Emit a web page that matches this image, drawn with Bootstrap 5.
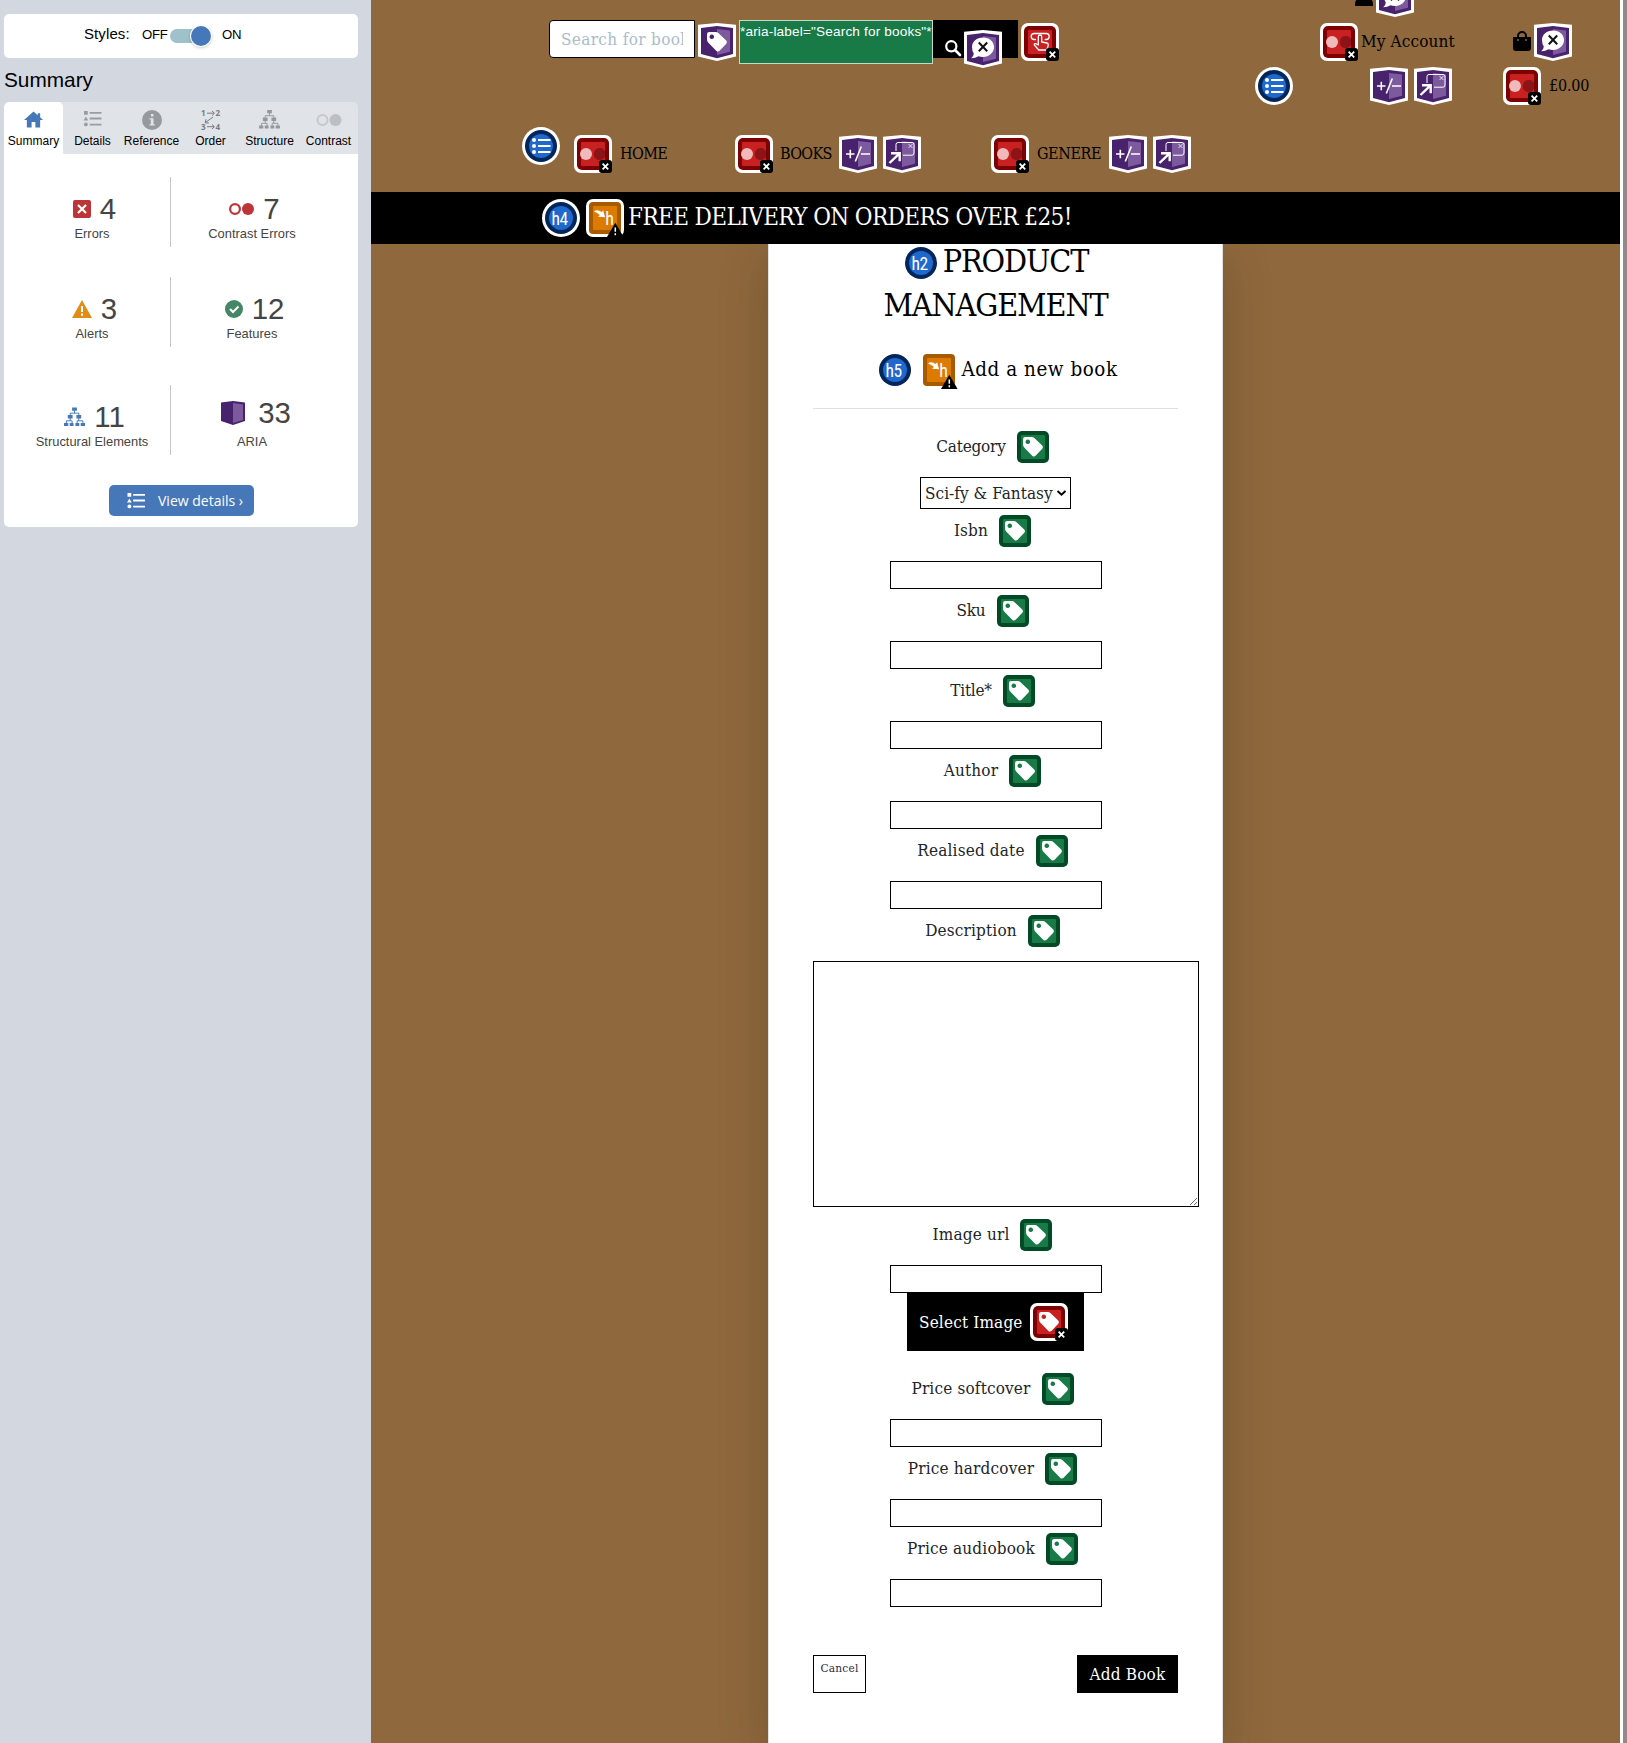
<!DOCTYPE html>
<html lang="en">
<head>
<meta charset="utf-8">
<meta name="viewport" content="width=device-width, initial-scale=1">
<title>Product Management</title>
<link href="https://cdn.jsdelivr.net/npm/bootstrap@5.3.0/dist/css/bootstrap.min.css" rel="stylesheet">
<style>
body{font-family:"Liberation Sans",Arial,sans-serif;color:#000;height:1743px;overflow:hidden;background:#8f683d}
svg{display:block;flex:none;overflow:visible}
.shell{height:1743px}
/* evaluation sidebar */
.side{width:371px;background:#d3d8e0;padding:14px 13px 0 4px}
.panel{background:#fff;border-radius:5px}
.styles-box{height:44px;padding-left:80px}
.styles-box span{margin-bottom:3px;white-space:nowrap}
.st1{font-size:15px;width:58px;letter-spacing:.1px}
.st2{font-size:13.2px;width:28px;letter-spacing:-.3px}
.st3{font-size:13.2px;margin-left:12px;letter-spacing:-.3px}
.track{width:40px;height:14px;border-radius:7px;background:#9fc1cc}
.knob{width:20px;height:20px;border-radius:50%;background:#4677b8;box-shadow:0 0 0 1px #fff,0 1px 3px 1px #0003;right:-1px;top:-3px}
.side-title{font-size:20.8px;line-height:24px;margin:10px 0 10px;font-weight:400}
.wtabs{height:52px;background:#e0e3e8;border-radius:5px 5px 0 0;overflow:hidden}
.wtab{width:59px;font-size:12px;line-height:14px}
.wtab.on{background:#fff;border-radius:5px 5px 0 0}
.wtab svg{height:20px;margin:8px 0 4px}
.results{height:373px;border-radius:0 0 5px 5px;padding-top:23px}
.stat{width:162px;height:70px;color:#444;font-size:12.9px}
.stat:nth-child(odd){width:167px;border-right:1px solid #c4c4c4;padding-left:10px}
.stat b{font-weight:400;font-size:29.4px;line-height:32px}
.stat .top-line{height:32px;margin-top:16px;gap:9px;padding-left:5px}
.stat .up{margin-top:12px;margin-bottom:4px;gap:13px;padding-left:8px}
.stat .cap{line-height:16px;margin-top:1px}
.row-b{margin-top:30px}.row-c{margin-top:38px}
.view-btn{width:145px;height:31px;background:#4677b8;border-radius:5px;color:#fff;font:14px/31px "Open Sans",sans-serif;padding-left:17px;margin:30px 0 0 105px}
.vd{margin-left:12px}
/* shop header */
.page{width:1249px;background:#8f683d;font-family:"DejaVu Serif Condensed","DejaVu Serif",serif;font-stretch:condensed;font-size:16px}
.top{height:192px;overflow:hidden}
.left-top{width:821px}
.ic{width:38px;height:38px}
.n3{margin:3px 0 0 3px}.gap3{margin-left:3px}.gap6{margin-left:6px}
.search-row{padding:20px 0 0 178px;height:64px}
.find{width:146px;height:38px;border:1px solid #000;border-radius:4px 0 0 4px;padding:0 11px;font-size:17px;color:#a9bccb;background:#fff;line-height:36px}
.find span{display:block;overflow:hidden;white-space:nowrap;letter-spacing:.35px}
.aria-note{width:194px;height:44px;border:1px solid #c8d8c8;background:#177a47;color:#fff;font:13.6px/15px "Liberation Sans",Arial,sans-serif;padding-top:3px;white-space:nowrap;letter-spacing:.16px}
.find-btn{width:85px;height:38px;background:#000;padding-left:12px}
.glass{margin-top:20px}.say1{margin:10px 0 0 3px}
.menu{padding:63px 0 0 151px}
.menu .lab{white-space:nowrap;line-height:38px}
.m1{margin:8px 0 0 14px;width:161px}.m2{margin-top:8px;width:256px}.m3{margin-top:8px}
.l-home{margin-left:8px;letter-spacing:-.6px}.l-books{margin-left:7px;width:59px;letter-spacing:-.7px}.l-gen{margin-left:8px;width:72px;letter-spacing:-.4px}
.right-top{margin-top:-21px;gap:6px}
.right-top>div{height:38px;line-height:38px;white-space:nowrap}
.ra{padding-left:163px}.user{margin-top:9px}
.rb{padding-left:128px}.acc{width:152px;padding-left:3px;font-size:17px;line-height:36px;letter-spacing:.15px}.bag{margin:8px 0 0 3px}
.rc{padding-left:63px}.pm1{margin-left:77px}.con1{margin-left:51px}.price{margin-left:8px;letter-spacing:-.2px}
.banner{height:52px;background:#000;color:#fff;font-size:24px;line-height:37px;padding:7px 0 0 171px;white-space:nowrap;position:relative;z-index:1}
.bt{margin-left:4px;letter-spacing:-.6px}
/* product form */
.sheet{width:455px;height:1504px;margin:-5px 0 0 397px;background:#fff;border:1px solid #dee2e6;border-width:0 1px;box-shadow:0 1rem 3rem rgba(0,0,0,.175);padding:0 44px;font-size:17px;letter-spacing:.17px}
.sheet h2{font-size:32px;line-height:44px;font-weight:400;margin:0;color:#000;letter-spacing:-1.1px}
.h2i{display:inline-block;vertical-align:-1px;margin:-6px 6px -6px 2px}
.sheet h5{font-size:20.4px;line-height:31px;font-weight:400;margin:27px 0 0;padding-left:6px;color:#000;gap:12px;letter-spacing:.55px}
.anb{margin-left:-6px}
.ruled{height:1px;background:#dfdfdf;margin:22px 0}
.fld{height:32px;gap:11px;color:#212529;margin-bottom:14px;padding-right:6px;line-height:31px;white-space:nowrap}
.snug{letter-spacing:-.2px}
.box{width:212px;height:28px;border:1px solid #000;border-radius:0;display:block;margin:0 0 6px 77px;background:#fff}
.pick{width:151px;height:32px;border:1px solid #000;margin:0 0 6px 107px;padding:0 4px;line-height:30px;white-space:nowrap;color:#212529;letter-spacing:.05px}
.area{width:386px;height:246px;border:1px solid #000;display:block;margin:0 0 12px;background:#fff;resize:vertical}
.img-btn{width:177px;height:58px;background:#000;color:#fff;margin:-6px 0 22px 94px;padding:0 0 1px 12px;line-height:58px;white-space:nowrap}
.img-btn svg{margin-left:7px}
.foot{margin-top:48px}
.cancel{width:53px;height:38px;border:1px solid #000;font-size:11.8px;line-height:24px;color:#2a2a40;text-align:center}
.add{width:101px;height:38px;background:#000;color:#fff;line-height:38px;text-align:center;white-space:nowrap}
.edge{width:7px;background:#8c8c8c;border-left:3px solid #fff}
</style>
</head>
<body>
<svg width="0" height="0" class="position-absolute">
<defs>
<g id="xb"><rect x="25" y="25" width="13" height="13" rx="3" fill="#000"/><path d="M28.600 28.600l5.600 5.800M34.200 28.600l-5.600 5.800" stroke="#fff" stroke-width="1.800"/></g>
<g id="redbase"><rect width="38" height="38" rx="7" fill="#fff"/><rect x="3" y="3" width="32" height="32" rx="5" fill="#7d0003"/><rect x="7" y="7" width="24" height="24" rx="1" fill="#c92021"/></g>
<g id="tagshape"><path fill-rule="evenodd" fill="#fff" d="M9 11.200q0-2.200 2.200-2.200h6.400q1.800 0 3 1.200l7.600 7.400q1.500 1.600.1 3.200l-6.700 7q-1.600 1.500-3.200.1l-8-8.100q-1.400-1.400-1.400-3.200zM13.800 11.500a2.300 2.300 0 1 0 .01 0z"/></g>
<g id="ar"><path d="M0 1.700L19 0l19 1.700v31.800L19 38 0 33.500z" fill="#fff"/><path d="M3 5l16-2 16 2v26l-16 4.200L3 31z" fill="#48226c"/><path d="M19 6l13 1.500v21.200L19 32z" fill="#7c5a9d"/></g>
<symbol id="con" viewBox="0 0 38 38"><use href="#redbase"/><circle cx="12" cy="19" r="6" fill="#f0b9ba"/><path d="M31 16.200a6 6 0 1 0 0 5.600z" fill="#8c1417"/><use href="#xb"/></symbol>
<symbol id="redtag" viewBox="0 0 38 38"><use href="#redbase"/><use href="#tagshape"/><use href="#xb"/></symbol>
<symbol id="hand" viewBox="0 0 38 38"><use href="#redbase"/><g fill="none" stroke="#fff" stroke-width="1.300" stroke-linejoin="round" stroke-linecap="round"><path d="M14.500 16.500h-1.300a3 3 0 0 1 0-6h12a3 3 0 0 1 0 6h-1"/><path d="M17.300 22v-8.300a1.700 1.700 0 0 1 3.400 0V19l5.300 1q1.500.4 1.200 2.300l-1.300 4.700h-8.200l-4.300-5q-.6-1.600 1.600-1.300z"/></g><use href="#xb"/></symbol>
<symbol id="gtag" viewBox="3 3 32 32"><rect x="3" y="3" width="32" height="32" rx="5" fill="#004b26"/><rect x="7" y="7" width="24" height="24" rx="1" fill="#177a47"/><use href="#tagshape"/></symbol>
<symbol id="ptag" viewBox="0 0 38 38"><use href="#ar"/><use href="#tagshape"/></symbol>
<symbol id="pm" viewBox="0 0 38 38"><use href="#ar"/><path d="M7 19h8.500M11.300 14.700v8.600M22.300 11.500l-6 15M22 19h9" stroke="#fff" stroke-width="1.600" fill="none"/></symbol>
<symbol id="pop" viewBox="0 0 38 38"><use href="#ar"/><path d="M13 16v-6.500q0-2 2-2h14q2 0 2 2V18q0 2.200-2 2.200h-9" fill="none" stroke="#fff" stroke-width="1"/><path d="M25.500 9l4 4M29.500 9l-4 4" stroke="#fff" stroke-width=".8"/><path d="M6.500 28L16 18.800M8 18.200h8.700v8" fill="none" stroke="#fff" stroke-width="2.400"/></symbol>
<symbol id="say" viewBox="0 0 38 38"><use href="#ar"/><path d="M19 7.500c6.200 0 11 4 11 9.500s-4.800 10-11 10q-2.600 0-4.500-.8-3 2-7.300 2 2.500-2 2.600-4.800Q8 21 8 17c0-5.500 4.800-9.500 11-9.500z" fill="#fff"/><path d="M14.800 12.500l8.400 8.800M23.200 12.500l-8.400 8.800" stroke="#111" stroke-width="2"/></symbol>
<g id="disc"><circle cx="19" cy="19" r="19" fill="#fff"/><circle cx="19" cy="19" r="16" fill="#02265a"/><circle cx="19" cy="19" r="12" fill="#1f68ce"/></g>
<symbol id="lst" viewBox="0 0 38 38"><use href="#disc"/><g fill="#fff"><circle cx="12" cy="13" r="2"/><circle cx="12" cy="19" r="2"/><circle cx="12" cy="25" r="2"/></g><path d="M16 13h12.500M16 19h12.500M16 25h12.500" stroke="#fff" stroke-width="2"/></symbol>
<g id="org"><rect width="38" height="38" rx="7" fill="#fff"/><rect x="3" y="3" width="32" height="32" rx="4" fill="#a85a00"/><rect x="7" y="7" width="24" height="24" rx="1" fill="#dd7a00"/><path d="M8 12.500q3-2.600 7.800.6l1.300-1.800 2 7-7-.6 1.800-1.800q-2.400-2.300-5.900-3.400z" fill="#fff"/><text x="19.300" y="26" font-family="Roboto" font-size="18" letter-spacing="0" fill="#fff">h</text><path d="M29.300 23.800l8.300 14.200H21z" fill="#000"/><path d="M29.300 28.500v4.300M29.300 34.300v1.900" stroke="#fff" stroke-width="1.500"/></g>
<symbol id="home" viewBox="0 0 20 20"><path d="M10 1L0 10h3v8h5v-6h4v6h5v-8h3l-3-2.800V3h-2.500v2z" fill="#4677b8"/></symbol>
<symbol id="bul" viewBox="0 0 20 18"><path d="M1 1h4v4H1zM3 7l2.500 4h-5z" fill="currentColor"/><circle cx="3" cy="15.300" r="2" fill="currentColor"/><path d="M7 3h12.500M7 9h12.500M7 15.500h12.500" stroke="currentColor" stroke-width="2"/></symbol>
<symbol id="tree" viewBox="0 0 22 20"><path d="M8.500 0h5v3.500h-5zM4 8h5v3.500H4zM13 8h5v3.500h-5zM0 16.200h4.500v3.300H0zM6 16.200h4v3.300H6zM12 16.200h4v3.300h-4zM17.500 16.200H22v3.300h-4.500z" fill="currentColor"/><path d="M11 3v3M6.500 8V6h9v2M6.500 11v3M15.500 11v3M2.500 16.500V14h6v2.500M13.800 16.500V14h6v2.500" fill="none" stroke="currentColor"/></symbol>
</defs></svg>
<div class="shell d-flex">
<aside class="side flex-shrink-0">
 <div class="panel styles-box d-flex align-items-center">
  <span class="st1">Styles:</span><span class="st2">OFF</span>
  <div class="track position-relative"><div class="knob position-absolute"></div></div>
  <span class="st3">ON</span>
 </div>
 <h1 class="side-title">Summary</h1>
 <div class="wtabs d-flex">
  <div class="wtab on d-flex flex-column align-items-center"><svg width="19"><use href="#home"/></svg>Summary</div>
  <div class="wtab d-flex flex-column align-items-center"><svg width="20" color="#999da1"><use href="#bul" width="19" height="17"/></svg>Details</div>
  <div class="wtab d-flex flex-column align-items-center"><svg width="20" viewBox="0 0 20 20"><circle cx="10" cy="10" r="10" fill="#969a9e"/><path d="M7.500 8.300h4v6h1.300v1.200H7.500v-1.200h1.300V9.500H7.500zM9 4h2.500v2.600H9z" fill="#e0e3e8"/></svg>Reference</div>
  <div class="wtab d-flex flex-column align-items-center"><svg width="20" viewBox="0 0 20 20" fill="#777b80" font-family="Open Sans" font-weight="700" font-size="8"><text x="0" y="6">1</text><text x="14.500" y="6">2</text><text x="0" y="19.500">3</text><text x="14.500" y="19.500">4</text><path d="M6 3.200h7M11 1l2.400 2.200L11 5.500M6 16.700h7M11 14.500l2.400 2.200L11 19M12 7l-7.500 5.500M5 9.300l-.8 3.500 3.600.2" fill="none" stroke="#777b80"/></svg>Order</div>
  <div class="wtab d-flex flex-column align-items-center"><svg width="21" color="#94989c"><use href="#tree" width="21" height="19"/></svg>Structure</div>
  <div class="wtab d-flex flex-column align-items-center"><svg width="26" viewBox="0 0 26 20"><circle cx="6.500" cy="10" r="5" fill="none" stroke="#c4c7cb" stroke-width="2"/><circle cx="19.500" cy="10" r="6" fill="#bcbfc3"/></svg>Contrast</div>
 </div>
 <div class="panel results">
  <div class="d-flex">
   <div class="stat d-flex flex-column align-items-center"><div class="top-line d-flex align-items-center"><svg width="18" height="18" viewBox="0 0 18 18"><rect width="18" height="18" rx="2" fill="#bd3538"/><path d="M5 5l8 8M13 5l-8 8" stroke="#fff" stroke-width="2.200"/></svg><b>4</b></div><div class="cap">Errors</div></div>
   <div class="stat d-flex flex-column align-items-center"><div class="top-line d-flex align-items-center"><svg width="25" height="12" viewBox="0 0 25 12"><circle cx="6" cy="6" r="4.900" fill="none" stroke="#bd3538" stroke-width="2.200"/><circle cx="19" cy="6" r="6" fill="#bd3538"/></svg><b>7</b></div><div class="cap">Contrast Errors</div></div>
  </div>
  <div class="d-flex row-b">
   <div class="stat d-flex flex-column align-items-center"><div class="top-line d-flex align-items-center"><svg width="20" height="18" viewBox="0 0 20 18"><path d="M10 0l10 18H0z" fill="#e28c18"/><path d="M10 6v6M10 13.500v2.200" stroke="#fff" stroke-width="2"/></svg><b>3</b></div><div class="cap">Alerts</div></div>
   <div class="stat d-flex flex-column align-items-center"><div class="top-line d-flex align-items-center"><svg width="18" height="18" viewBox="0 0 18 18"><circle cx="9" cy="9" r="9" fill="#458666"/><path d="M5 9l3 3 5.500-5.500" fill="none" stroke="#fff" stroke-width="2"/></svg><b>12</b></div><div class="cap">Features</div></div>
  </div>
  <div class="d-flex row-c">
   <div class="stat d-flex flex-column align-items-center"><div class="top-line d-flex align-items-center"><svg width="21" height="20" color="#4677b8"><use href="#tree"/></svg><b>11</b></div><div class="cap">Structural Elements</div></div>
   <div class="stat d-flex flex-column align-items-center"><div class="top-line up d-flex align-items-center"><svg width="24" height="24" viewBox="0 0 24 24"><path d="M0 1.500L12 0l12 1.500V20l-12 4L0 20z" fill="#48226c"/><path d="M12 2l10 1.500V19l-10 3z" fill="#7c5a9d"/></svg><b>33</b></div><div class="cap">ARIA</div></div>
  </div>
  <div class="view-btn d-flex align-items-center"><svg width="20" height="17"><use href="#bul"/></svg><span class="vd">View details ›</span></div>
 </div>
</aside>
<main class="page flex-shrink-0">
 <header class="top d-flex">
  <div class="left-top">
   <div class="search-row d-flex align-items-start">
    <div class="find"><span>Search for books</span></div>
    <svg class="ic n3"><use href="#ptag"/></svg>
    <div class="aria-note gap3">*aria-label="Search for books"*</div>
    <div class="find-btn d-flex"><svg class="glass" width="16" height="16" viewBox="0 0 16 16"><circle cx="6.300" cy="6.300" r="5.100" fill="none" stroke="#fff" stroke-width="2.200"/><path d="M10 10l5 5" stroke="#fff" stroke-width="2.600" stroke-linecap="round"/></svg><svg class="ic say1"><use href="#say"/></svg></div>
    <svg class="ic n3"><use href="#hand"/></svg>
   </div>
   <nav class="menu d-flex">
    <svg class="ic"><use href="#lst"/></svg>
    <div class="d-flex m1"><svg class="ic"><use href="#con"/></svg><span class="lab l-home">HOME</span></div>
    <div class="d-flex m2"><svg class="ic"><use href="#con"/></svg><span class="lab l-books">BOOKS</span><svg class="ic"><use href="#pm"/></svg><svg class="ic gap6"><use href="#pop"/></svg></div>
    <div class="d-flex m3"><svg class="ic"><use href="#con"/></svg><span class="lab l-gen">GENERE</span><svg class="ic"><use href="#pm"/></svg><svg class="ic gap6"><use href="#pop"/></svg></div>
   </nav>
  </div>
  <div class="right-top d-flex flex-column">
   <div class="d-flex ra"><svg class="user" width="18" height="18" viewBox="0 0 18 18"><circle cx="9" cy="4.500" r="4.500"/><path d="M0 18v-2q0-5.500 5.500-5.500h7q5.500 0 5.500 5.500v2z"/></svg><svg class="ic gap3"><use href="#say"/></svg></div>
   <div class="d-flex rb"><svg class="ic"><use href="#con"/></svg><span class="acc">My Account</span><svg class="bag" width="18" height="20" viewBox="0 0 18 20"><path d="M0 6h18v11q0 3-3 3H3q-3 0-3-3z"/><path d="M5 9V5a4 4 0 0 1 8 0v4" fill="none" stroke="#000" stroke-width="2"/><circle cx="5" cy="9" r=".9" fill="#8f683d"/><circle cx="13" cy="9" r=".9" fill="#8f683d"/></svg><svg class="ic gap3"><use href="#say"/></svg></div>
   <div class="d-flex rc"><svg class="ic"><use href="#lst"/></svg><svg class="ic pm1"><use href="#pm"/></svg><svg class="ic gap6"><use href="#pop"/></svg><svg class="ic con1"><use href="#con"/></svg><span class="price">£0.00</span></div>
  </div>
 </header>
 <section class="banner d-flex">
  <svg class="ic" viewBox="0 0 38 38"><use href="#disc"/><text x="9.500" y="25.500" font-family="Roboto" font-size="17.500" letter-spacing="-.5" fill="#fff">h4</text></svg>
  <svg class="ic gap6" viewBox="0 0 38 38"><use href="#org"/></svg>
  <span class="bt">FREE DELIVERY ON ORDERS OVER £25!</span>
 </section>
 <section class="sheet">
  <h2 class="text-center"><svg class="h2i" width="32" height="32" viewBox="3 3 32 32"><use href="#disc"/><text x="9.500" y="25.500" font-family="Roboto" font-size="17.500" letter-spacing="-.5" fill="#fff">h2</text></svg>PRODUCT<br>MANAGEMENT</h2>
  <h5 class="d-flex justify-content-center"><svg width="32" height="32" viewBox="3 3 32 32"><use href="#disc"/><text x="9.500" y="25.500" font-family="Roboto" font-size="17.500" letter-spacing="-.5" fill="#fff">h5</text></svg><svg width="32" height="32" viewBox="3 3 32 32"><use href="#org"/></svg><span class="anb">Add a new book</span></h5>
  <div class="ruled"></div>
  <div class="fld d-flex justify-content-center"><span class="snug">Category</span><svg width="32" height="32"><use href="#gtag"/></svg></div>
  <div class="pick d-flex align-items-center"><span>Sci-fy &amp; Fantasy</span><svg class="ms-auto" width="9" height="6" viewBox="0 0 9 6"><path d="M.5 1l4 3.700 4-3.700" fill="none" stroke="#000" stroke-width="2"/></svg></div>
  <div class="fld d-flex justify-content-center"><span>Isbn</span><svg width="32" height="32"><use href="#gtag"/></svg></div><input class="box">
  <div class="fld d-flex justify-content-center"><span class="snug">Sku</span><svg width="32" height="32"><use href="#gtag"/></svg></div><input class="box">
  <div class="fld d-flex justify-content-center"><span class="snug">Title*</span><svg width="32" height="32"><use href="#gtag"/></svg></div><input class="box">
  <div class="fld d-flex justify-content-center"><span>Author</span><svg width="32" height="32"><use href="#gtag"/></svg></div><input class="box">
  <div class="fld d-flex justify-content-center"><span>Realised date</span><svg width="32" height="32"><use href="#gtag"/></svg></div><input class="box">
  <div class="fld d-flex justify-content-center"><span>Description</span><svg width="32" height="32"><use href="#gtag"/></svg></div><textarea class="area"></textarea>
  <div class="fld d-flex justify-content-center"><span>Image url</span><svg width="32" height="32"><use href="#gtag"/></svg></div><input class="box">
  <div class="img-btn d-flex align-items-center"><span>Select Image</span><svg class="ic"><use href="#redtag"/></svg></div>
  <div class="fld d-flex justify-content-center"><span>Price softcover</span><svg width="32" height="32"><use href="#gtag"/></svg></div><input class="box">
  <div class="fld d-flex justify-content-center"><span>Price hardcover</span><svg width="32" height="32"><use href="#gtag"/></svg></div><input class="box">
  <div class="fld d-flex justify-content-center"><span>Price audiobook</span><svg width="32" height="32"><use href="#gtag"/></svg></div><input class="box">
  <div class="d-flex justify-content-between foot"><div class="cancel">Cancel</div><div class="add">Add Book</div></div>
 </section>
</main>
<div class="edge"></div>
</div>
<script src="https://cdn.jsdelivr.net/npm/bootstrap@5.3.0/dist/js/bootstrap.bundle.min.js"></script>
</body>
</html>
